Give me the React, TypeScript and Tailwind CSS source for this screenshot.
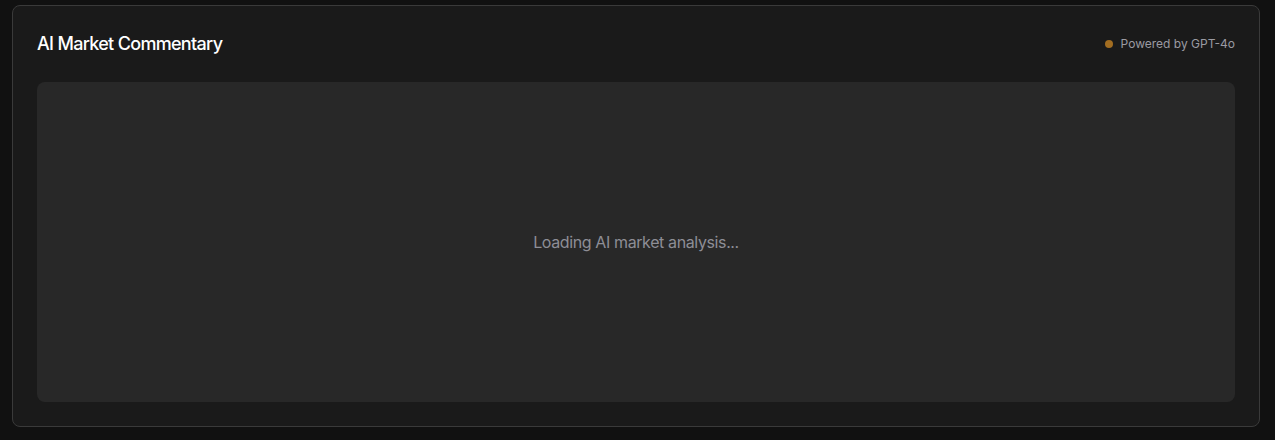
const App = () => {
  return (
    <div className="min-h-[440px] bg-[#111111] pt-[5px] pl-3 font-['Inter',sans-serif]">
      <section className="w-[1248px] h-[422px] rounded-lg border border-[#3a3a3a] bg-[#1a1a1a] p-6 flex flex-col">
        <div className="flex items-center justify-between h-7 mb-6">
          <h2 className="text-lg font-medium text-white tracking-[-0.038em]">AI Market Commentary</h2>
          <div className="flex items-center gap-2 text-xs text-[#9a9aa2]">
            <span className="w-2 h-2 rounded-full bg-[#a26d21]" />
            Powered by GPT-4o
          </div>
        </div>
        <div className="flex-1 rounded-lg bg-[#282828] flex items-center justify-center">
          <p className="text-base text-[#8e8e96] tracking-[-0.024em]">Loading AI market analysis...</p>
        </div>
      </section>
    </div>
  );
};

export default App;
